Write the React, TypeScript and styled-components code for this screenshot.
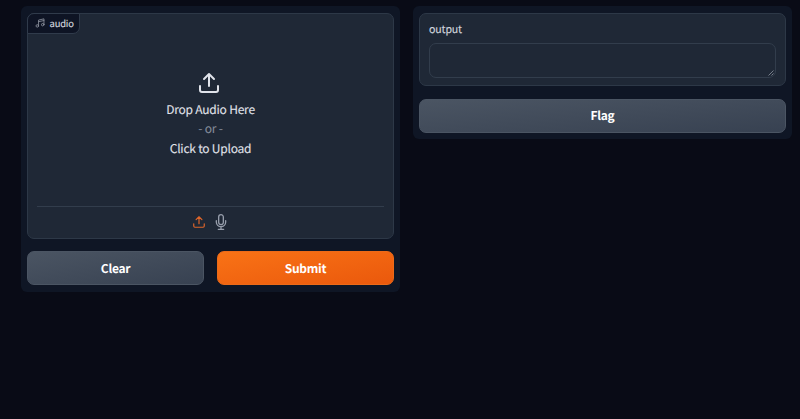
import React from 'react';
import styled, { createGlobalStyle } from 'styled-components';

const GlobalStyle = createGlobalStyle`
  * { box-sizing: border-box; }
  html, body { margin: 0; background: #090b16; }
  body {
    height: 419px;
    overflow: hidden;
    font-family: "Noto Sans CJK SC", "Open Sans", sans-serif;
    text-rendering: geometricPrecision;
    color: #e0e3ea;
  }
`;

const Page = styled.main`
  display: grid;
  grid-template-columns: 379px 379px;
  column-gap: 13px;
  align-items: start;
  padding: 6px 8px 0 21px;
  height: 419px;
`;

const Panel = styled.section`
  display: flex;
  flex-direction: column;
  gap: 12.5px;
  padding: 6.5px 6px;
  border-radius: 6px;
  background: #0f1625;
`;

const Block = styled.div<{ $height: number }>`
  position: relative;
  display: flex;
  flex-direction: column;
  height: ${(p) => p.$height}px;
  padding: 0 9px;
  border: 1px solid #2d3847;
  border-radius: 7px;
  background: #1f2836;
`;

const BlockLabel = styled.div`
  position: absolute;
  top: -1px;
  left: -1px;
  display: flex;
  align-items: center;
  gap: 5px;
  width: 53px;
  height: 21px;
  padding-left: 6.5px;
  border: 1px solid #303b4b;
  border-radius: 7px 0 7px 0;
  background: #0e1424;
  color: #d3d6de;
  font-size: 9.4px;
  letter-spacing: -0.15px;
  line-height: 14px;
  -webkit-text-stroke: 0.15px currentColor;

  svg { color: #8b909c; }
`;

const DropZone = styled.div`
  flex: 1;
  display: flex;
  flex-direction: column;
  align-items: center;
  justify-content: center;
  padding: 9px 0 0 0;
  font-size: 12px;
  letter-spacing: -0.22px;
  line-height: 19.2px;
  -webkit-text-stroke: 0.1px currentColor;

  svg { margin: 1px 3px 5px 0; }
`;

const Separator = styled.span`
  color: #858c9a;
`;

const Sources = styled.div`
  display: flex;
  justify-content: center;
  align-items: center;
  gap: 7px;
  height: 32px;
  border-top: 1px solid #323d4c;
`;

const SourceIcon = styled.span<{ $active?: boolean }>`
  display: flex;
  color: ${(p) => (p.$active ? '#e0662a' : '#969dab')};
`;

const ButtonRow = styled.div`
  display: grid;
  grid-template-columns: 1fr 1fr;
  gap: 13px;
`;

const Button = styled.button<{ $primary?: boolean }>`
  width: 100%;
  height: 34px;
  padding: 1px 0 0;
  border: 1px solid ${(p) => (p.$primary ? '#ec6a18' : '#4b5563')};
  border-radius: 7px;
  background: ${(p) =>
    p.$primary
      ? 'linear-gradient(to bottom right, #f97316, #ea580c)'
      : 'linear-gradient(to bottom right, #4b5563, #374151)'};
  background-origin: border-box;
  color: #fff;
  font-family: inherit;
  font-size: 12px;
  font-weight: 700;
  letter-spacing: -0.3px;
  line-height: 18px;
  text-rendering: inherit;
`;

const FieldLabel = styled.label`
  margin-top: 8px;
  font-size: 10.6px;
  letter-spacing: -0.15px;
  line-height: 16px;
  color: #d0d4dc;
  -webkit-text-stroke: 0.15px currentColor;
`;

const OutputField = styled.div`
  display: flex;
  justify-content: flex-end;
  align-items: flex-end;
  height: 35px;
  margin-top: 5.5px;
  padding: 1px;
  border: 1px solid #323d4c;
  border-radius: 7px;
  color: #8b93a0;
`;

const UploadIcon = ({ size, stroke = 2 }: { size: number; stroke?: number }) => (
  <svg width={size} height={size} viewBox="0 0 24 24" fill="none" stroke="currentColor" strokeWidth={stroke} strokeLinecap="round" strokeLinejoin="round">
    <path d="M21 15v4a2 2 0 0 1-2 2H5a2 2 0 0 1-2-2v-4" />
    <path d="M17 8l-5-5-5 5M12 3v12" />
  </svg>
);

const MicIcon = () => (
  <svg width="16" height="16" viewBox="0 0 24 24" fill="none" stroke="currentColor" strokeWidth="2" strokeLinecap="round" strokeLinejoin="round">
    <path d="M12 1a3.5 3.5 0 0 0-3.5 3.5v8a3.5 3.5 0 0 0 7 0v-8A3.5 3.5 0 0 0 12 1z" />
    <path d="M19 10v2a7 7 0 0 1-14 0v-2M12 19v4M8 23h8" />
  </svg>
);

const MusicIcon = () => (
  <svg width="10" height="10" viewBox="0 0 24 24" fill="none" stroke="currentColor" strokeWidth="2" strokeLinecap="round" strokeLinejoin="round">
    <path d="M8.5 19V5l13-3v14M8.5 9l13-3" />
    <circle cx="5.5" cy="19" r="3" />
    <circle cx="18.5" cy="16" r="3" />
  </svg>
);

const ResizeGrip = () => (
  <svg width="6" height="6" viewBox="0 0 6 6" stroke="currentColor" strokeWidth="0.8">
    <path d="M0.5 5.5l5-5M3.5 5.5l2-2" />
  </svg>
);

export default function App() {
  return (
    <>
      <GlobalStyle />
      <Page>
        <Panel>
          <Block $height={226}>
            <BlockLabel>
              <MusicIcon />
              audio
            </BlockLabel>
            <DropZone>
              <UploadIcon size={24} />
              <span>Drop Audio Here</span>
              <Separator>- or -</Separator>
              <span>Click to Upload</span>
            </DropZone>
            <Sources>
              <SourceIcon $active>
                <UploadIcon size={14} />
              </SourceIcon>
              <SourceIcon>
                <MicIcon />
              </SourceIcon>
            </Sources>
          </Block>
          <ButtonRow>
            <Button>Clear</Button>
            <Button $primary>Submit</Button>
          </ButtonRow>
        </Panel>
        <Panel>
          <Block $height={73.5}>
            <FieldLabel>output</FieldLabel>
            <OutputField>
              <ResizeGrip />
            </OutputField>
          </Block>
          <Button>Flag</Button>
        </Panel>
      </Page>
    </>
  );
}
